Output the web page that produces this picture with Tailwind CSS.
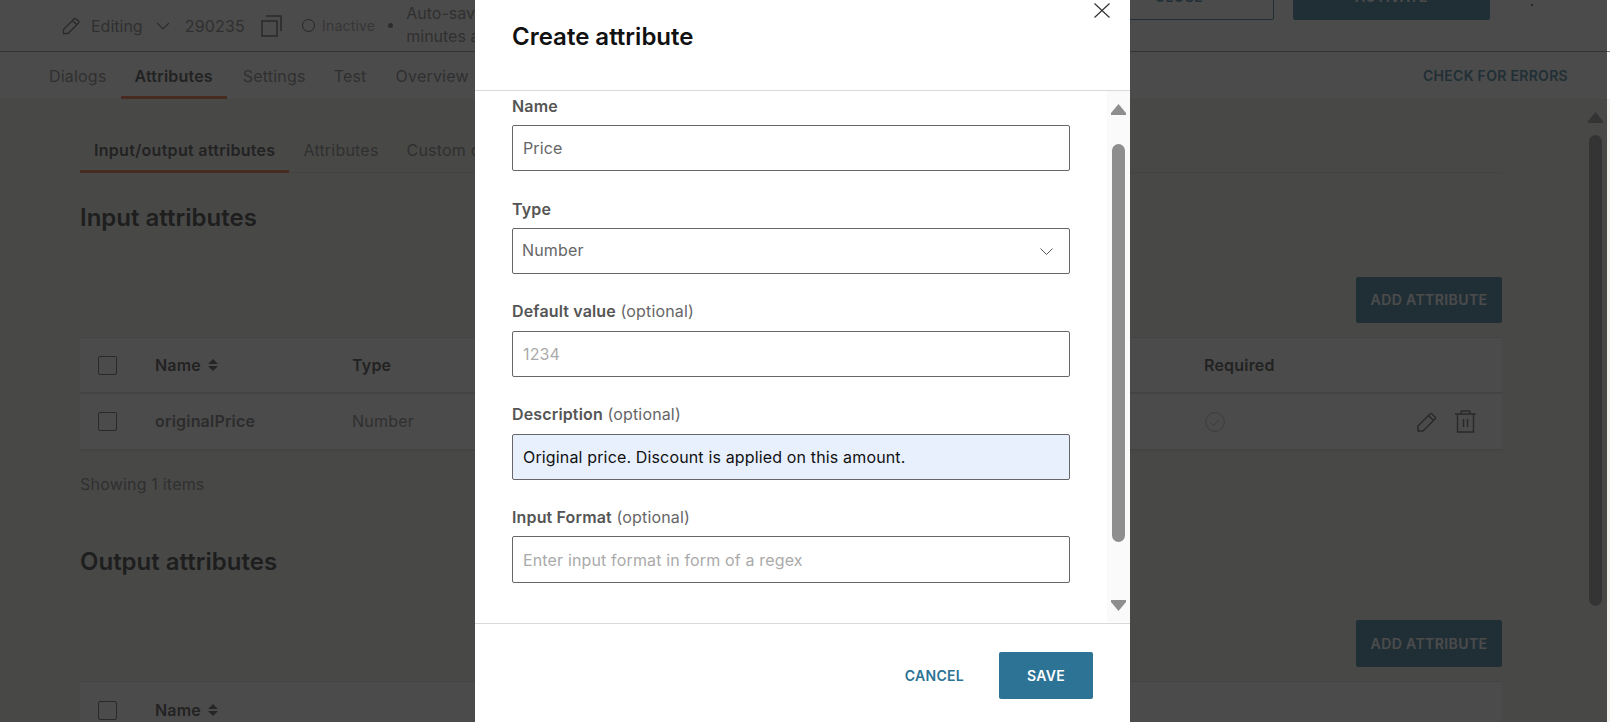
<!DOCTYPE html>
<html lang="en">
<head>
  <meta charset="UTF-8">
  <title>Create attribute</title>
  <script src="https://cdn.jsdelivr.net/npm/@tailwindcss/browser@4"></script>
</head>
<body class="font-['Inter',sans-serif] bg-[#f0f0ec] overflow-hidden">
  <div class="relative h-[722px] w-[1610px] overflow-hidden">

    <!-- page behind the modal -->
    <div class="flex h-[52px] bg-white border-b border-[#8a8a8a] pl-[62px] text-[#777] text-base">
      <div class="flex items-center h-[51px] gap-[13px]">
        <svg class="w-[18px] h-[18px]" viewBox="0 0 18 18" fill="none" stroke="#555" stroke-width="1.3"><path d="M1.500 12.500L12 2q1-1 2 0l2.500 2q1 1 0 2L6 16.500H1.500z M10.500 3.500L15 8"/></svg>
        <span class="-ml-[2px]">Editing</span>
        <svg class="w-[14px] h-[8px]" viewBox="0 0 14 8" fill="none" stroke="#666" stroke-width="1.2"><path d="M1 1l6 6 6-6"/></svg>
        <span class="ml-[2px] tracking-[.2px]">290235</span>
        <svg class="ml-[3px] w-[21px] h-[22px]" viewBox="0 0 21 22" fill="none" stroke="#555" stroke-width="1.5"><path d="M1 6h15v15H1z M5 1h15v15"/></svg>
        <span class="ml-[7px] w-[13px] h-[13px] rounded-full border-[1.5px] border-[#444]"></span>
      </div>
      <span class="self-center ml-[7px] text-sm text-[#999] tracking-[.2px]">Inactive</span>
      <span class="self-center ml-[13px] w-[5px] h-[5px] rounded-full bg-[#666]"></span>
      <div class="ml-[13px] pt-[2px] leading-[23px] w-[200px]">Auto-saved 2<br>minutes ago</div>
      <div class="flex ml-auto h-[46px] -mt-[26px] mr-[120px] gap-[19px] text-sm font-semibold tracking-[.5px]">
        <div class="flex items-center justify-center w-[190px] border border-[#2c7395] rounded-[2px] text-[#2c7395]">CLOSE</div>
        <div class="flex items-center justify-center w-[197px] bg-[#2c7395] rounded-[2px] text-white">ACTIVATE</div>
      </div>
      <span class="absolute left-[1531px] top-[4px] w-[2px] h-[2px] rounded-full bg-black"></span>
    </div>
    <div class="flex items-center h-[47px] bg-white text-base text-[#777] pl-[49px] tracking-[.2px]">
      <a>Dialogs</a>
      <a class="relative ml-[28px] font-semibold text-[#333] h-full flex items-center">Attributes<span class="absolute -left-[14px] -right-[14px] bottom-0 h-[3px] bg-[#f0622a]"></span></a>
      <a class="ml-[30px]">Settings</a>
      <a class="ml-[28px]">Test</a>
      <a class="ml-[29px]">Overview</a>
      <a class="ml-auto mr-[42px] text-sm font-semibold tracking-[.3px] text-[#2c7395]">CHECK FOR ERRORS</a>
    </div>

    <div class="pl-[80px] pr-[108px] pt-[27px]">
      <div class="flex items-center h-[47px] pt-[2px] border-b border-[#d8d8d8] text-base text-[#777] tracking-[.2px]">
        <a class="relative font-semibold text-[#333] tracking-[.3px] pl-[14px] pr-[14px] h-full flex items-center">Input/output attributes<span class="absolute left-0 right-0 -bottom-px h-[3px] bg-[#f0622a]"></span></a>
        <a class="ml-[14px]">Attributes</a>
        <a class="ml-[28px]">Custom code</a>
      </div>
      <h2 class="mt-[31px] text-2xl leading-[28px] font-semibold text-[#222]">Input attributes</h2>
      <div class="flex justify-end mt-[45px]">
        <button class="w-[146px] h-[46px] rounded-[2px] bg-[#2c7395] text-white text-sm font-semibold tracking-[.4px]">ADD ATTRIBUTE</button>
      </div>
      <div class="mt-[14px] bg-white text-base tracking-[.2px]">
        <div class="grid grid-cols-[75px_197px_852px_1fr] items-center h-[57px] border-t border-b-2 border-[#ddd] font-semibold text-[#333]">
          <span class="ml-[18px] w-[19px] h-[19px] border-[1.5px] border-[#555] rounded-[2px]"></span>
          <span class="flex items-center gap-[7px]">Name <svg class="w-[10px] h-[12px]" viewBox="0 0 10 12" fill="#444"><path d="M5 0l5 5H0z M5 12l5-5H0z"/></svg></span>
          <span>Type</span>
          <span>Required</span>
        </div>
        <div class="grid grid-cols-[75px_197px_852px_1fr] items-center h-[57px] border-b-2 border-[#ddd] text-[#777]">
          <span class="ml-[18px] w-[19px] h-[19px] border-[1.5px] border-[#555] rounded-[2px]"></span>
          <span class="font-semibold text-[#666] pb-[2px]">originalPrice</span>
          <span class="pb-[2px]">Number</span>
          <div class="flex items-center">
            <svg class="ml-px w-[20px] h-[20px]" viewBox="0 0 20 20" fill="none" stroke="#aaa" stroke-width="1"><circle cx="10" cy="10" r="9.300"/><path d="M5.500 10.500l3 3 6-6"/></svg>
            <svg class="ml-[192px] w-[20px] h-[20px]" viewBox="0 0 20 20" fill="none" stroke="#555" stroke-width="1.500"><path d="M1 14L13 2q1-1 2 0l3 3q1 1 0 2L6 19H1z M11.500 3.500l5 5"/></svg>
            <svg class="ml-[18px] w-[21px] h-[23px]" viewBox="0 0 21 23" fill="none" stroke="#555" stroke-width="1.500"><path d="M0 4h21 M2.500 4v18h16V4 M6 4V2q0-1 1-1h7q1 0 1 1v2 M8.500 9v8 M12.500 9v8"/></svg>
          </div>
        </div>
      </div>
      <p class="mt-[24px] text-base leading-[18px] text-[#777] tracking-[.2px]">Showing 1 items</p>
      <h2 class="mt-[55px] text-2xl leading-[28px] font-semibold text-[#222]">Output attributes</h2>
      <div class="flex justify-end mt-[44px]">
        <button class="w-[146px] h-[47px] rounded-[2px] bg-[#2c7395] text-white text-sm font-semibold tracking-[.4px]">ADD ATTRIBUTE</button>
      </div>
      <div class="mt-[14px] bg-white text-base tracking-[.2px]">
        <div class="grid grid-cols-[75px_197px_852px_1fr] items-center h-[57px] border-t border-[#ddd] font-semibold text-[#333]">
          <span class="ml-[18px] w-[19px] h-[19px] border-[1.5px] border-[#555] rounded-[2px]"></span>
          <span class="flex items-center gap-[7px]">Name <svg class="w-[10px] h-[12px]" viewBox="0 0 10 12" fill="#444"><path d="M5 0l5 5H0z M5 12l5-5H0z"/></svg></span>
        </div>
      </div>
    </div>

    <!-- page scrollbar -->
    <div class="absolute left-[1588px] top-[112px] w-[15px] flex flex-col items-center">
      <svg class="w-[15px] h-[11px]" viewBox="0 0 15 11" fill="#8e8e8e"><path d="M7.500 0L15 9v2H0V9z"/></svg>
      <div class="mt-[12px] w-[13px] h-[471px] rounded-full bg-[#8e8e8e]"></div>
    </div>

    <!-- dimming layer stops short of the window edge, and dialog -->
    <div class="absolute inset-y-0 left-0 right-[3px] bg-[#1e1e1e]/80"></div>
    <div class="absolute left-[475px] top-0 w-[655px] h-[722px] bg-white flex flex-col">
      <div class="relative h-[91px] shrink-0 border-b border-[#d9d9d9] pl-[37px] pt-[22px]">
        <h1 class="text-2xl leading-[30px] font-semibold text-[#111]">Create attribute</h1>
        <svg class="absolute left-[619px] top-[3px] w-[16px] h-[15px]" viewBox="0 0 16 15" fill="none" stroke="#333" stroke-width="1.200"><path d="M.5.500l15 14 M15.500.500l-15 14"/></svg>
      </div>
      <div class="flex h-[532px] shrink-0">
        <div class="w-[632px] pl-[37px] pr-[37px] text-base tracking-[.15px]">
          <label class="block mt-[5px] h-[29px] leading-[20px] font-semibold text-[#555]">Name</label>
          <input class="block w-[558px] h-[46px] px-[10px] border border-[#666] rounded-[2px] text-[#666] outline-none" value="Price">
          <label class="block mt-[28px] h-[29px] leading-[20px] font-semibold text-[#555]">Type</label>
          <div class="relative w-[558px] h-[46px] flex items-center pl-[9px] pb-[2px] border border-[#666] rounded-[2px] text-[#666]">
            Number
            <svg class="absolute right-[16px] top-[19px] w-[13px] h-[7px]" viewBox="0 0 13 7" fill="none" stroke="#555" stroke-width="1"><path d="M.5.500l6 6 6-6"/></svg>
          </div>
          <label class="block mt-[27px] h-[30px] leading-[20px] text-[#666]"><span class="font-semibold text-[#555]">Default value</span> (optional)</label>
          <input class="block w-[558px] h-[46px] px-[10px] border border-[#666] rounded-[2px] outline-none placeholder:text-[#aaa]" placeholder="1234">
          <label class="block mt-[27px] h-[30px] leading-[20px] text-[#666]"><span class="font-semibold text-[#555]">Description</span> (optional)</label>
          <input class="block w-[558px] h-[46px] px-[10px] border border-[#666] rounded-[2px] bg-[#e8f0fe] text-[#111] outline-none" value="Original price. Discount is applied on this amount.">
          <label class="block mt-[27px] h-[29px] leading-[20px] text-[#666]"><span class="font-semibold text-[#555]">Input Format</span> (optional)</label>
          <input class="block w-[558px] h-[47px] px-[10px] border border-[#666] rounded-[2px] outline-none placeholder:text-[#aaa]" placeholder="Enter input format in form of a regex">
        </div>
        <div class="w-[23px] h-[531px] bg-[#fafafa] flex flex-col items-center pt-[13px] pr-[1px]">
          <svg class="w-[15px] h-[11px]" viewBox="0 0 15 11" fill="#8e8e8e"><path d="M7.500 0L15 9v2H0V9z"/></svg>
          <div class="mt-[29px] w-[13px] h-[398px] rounded-full bg-[#8e8e8e]"></div>
          <svg class="mt-[58px] w-[15px] h-[11px]" viewBox="0 0 15 11" fill="#8e8e8e"><path d="M7.500 11L15 2V0H0v2z"/></svg>
        </div>
      </div>
      <div class="flex-1 border-t border-[#d9d9d9] flex items-start justify-end pr-[37px] pt-[28px]">
        <button class="mt-[14px] mr-[35px] text-sm font-semibold tracking-[.3px] text-[#2c7395]">CANCEL</button>
        <button class="w-[94px] h-[47px] rounded-[2px] bg-[#2c7395] text-white text-sm font-semibold tracking-[.3px]">SAVE</button>
      </div>
    </div>
  </div>
</body>
</html>
